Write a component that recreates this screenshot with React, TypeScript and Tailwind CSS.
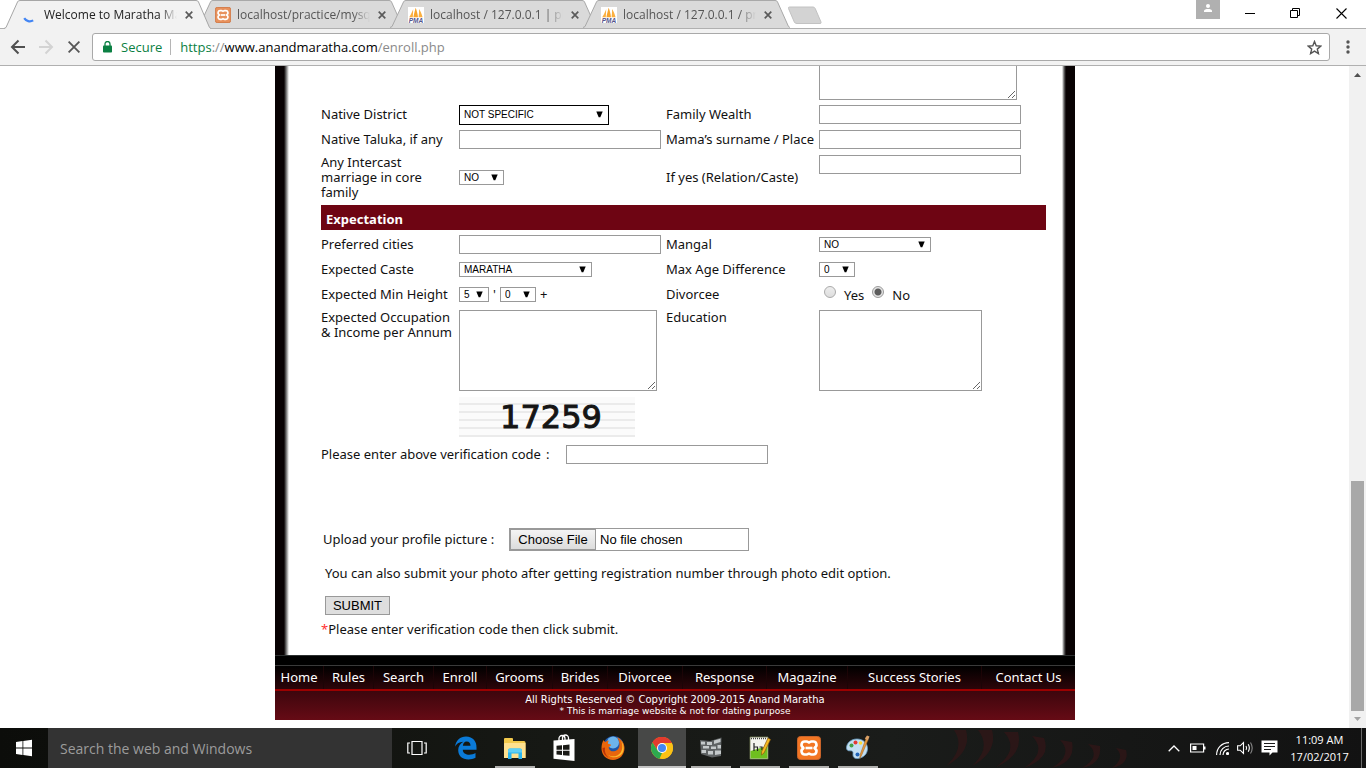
import React from "react";

const uiFont = "font-['Open_Sans','Noto_Sans',sans-serif]";

/* ---------- browser tabs ---------- */

function Spinner() {
  return (
    <svg width="16" height="16" viewBox="0 0 16 16" aria-hidden="true">
      <path d="M2.2 11.2a6.6 6.6 0 0 0 9 2.2" fill="none" stroke="#4285f4" strokeWidth="2.2" />
    </svg>
  );
}

function XamppLogo({ size, plate = "#f37623" }: { size: number; plate?: string }) {
  return (
    <svg width={size} height={size} viewBox="0 0 24 24" aria-hidden="true">
      <rect x="0.5" y="0.5" width="23" height="23" rx="3" fill={plate} stroke="#c9642a" />
      <path
        d="M8 5.5h1.6c1.4 0 2 1 2.4 1 .4 0 1-1 2.4-1H16a3.2 3.2 0 0 1 1.8 6 .6.6 0 0 0 0 1 3.2 3.2 0 0 1-1.8 6h-1.6c-1.4 0-2-1-2.4-1-.4 0-1 1-2.4 1H8a3.2 3.2 0 0 1-1.8-6 .6.6 0 0 0 0-1 3.2 3.2 0 0 1 1.800-6z"
        fill="none"
        stroke="#fff"
        strokeWidth="2.6"
      />
      <path d="M8.5 12h7" stroke="#fff" strokeWidth="2.6" />
    </svg>
  );
}

function PmaLogo() {
  return (
    <svg width="16" height="16" viewBox="0 0 16 16" aria-hidden="true">
      <rect width="16" height="16" fill="#fff" />
      <path d="M5.2 2.2C4 5 3 7.500 1.200 10.200h3.600z" fill="#fbb040" />
      <path d="M7.600.8C6.800 4.200 6 7 5.400 10.200H10C9.600 6.800 8.800 3.400 7.600.8z" fill="#f7a52d" />
      <path d="M11 2c.2 3-.2 5.600-.4 8.200h4C13.800 7.200 12.600 4.400 11 2z" fill="#fbb040" />
      <text x="8" y="15.800" textAnchor="middle" fontFamily="Liberation Sans, sans-serif" fontSize="6.500" fontWeight="700" fontStyle="italic" fill="#54558c">
        PMA
      </text>
    </svg>
  );
}

type TabProps = { title: string; icon: React.ReactNode; active?: boolean };

function Tab({ title, icon, active }: TabProps) {
  return (
    <div className={active ? "relative z-10 -mr-[14px] h-[29px] w-[207px] flex-none" : "relative -mr-[14px] h-7 w-[207px] flex-none"}>
      <svg className="absolute inset-0 size-full" viewBox="0 0 207 29" preserveAspectRatio="none" aria-hidden="true">
        <path d="M0 29 2 27.500 13.500 2Q14 .5 16 .5H192Q194 .5 194.500 2L205.500 27.500 207 29z" fill={active ? "#f2f2f2" : "#dadada"} />
        <path d="M0 28.500 2 27.500 13.500 2Q14 .5 16 .5H192Q194 .5 194.500 2L205.500 27.500 207 28.500" fill="none" stroke="#a6a6a6" />
      </svg>
      <div className="relative flex h-7 items-center pt-[2px] pl-[18px]">
        <span className="flex size-4 flex-none">{icon}</span>
        <a
          href="#tab"
          className={
            active
              ? "ml-[6px] w-[133px] flex-none overflow-hidden text-[12px] leading-4 whitespace-nowrap text-[#222] [mask-image:linear-gradient(to_right,#000_116px,transparent_133px)]"
              : "ml-[6px] w-[133px] flex-none overflow-hidden text-[12px] leading-4 whitespace-nowrap text-[#555] [mask-image:linear-gradient(to_right,#000_116px,transparent_133px)]"
          }
        >
          {title}
        </a>
        <button type="button" aria-label="Close tab" className="ml-[6px] flex size-3 items-center justify-center">
          <svg width="8" height="8" viewBox="0 0 9 9" aria-hidden="true">
            <path d="M.8.8l7.400 7.400M8.200.8.800 8.200" stroke="#5a5a5a" strokeWidth="1.900" />
          </svg>
        </button>
      </div>
    </div>
  );
}

function TabStrip() {
  return (
    <header className="relative z-10 flex h-7 bg-white pl-1">
      <Tab title="Welcome to Maratha Matrimony" icon={<Spinner />} active />
      <Tab title="localhost/practice/mysqli.php" icon={<XamppLogo size={16} plate="#e8915c" />} />
      <Tab title="localhost / 127.0.0.1 | phpMyAdmin" icon={<PmaLogo />} />
      <Tab title="localhost / 127.0.0.1 / practice" icon={<PmaLogo />} />
      <button type="button" aria-label="New tab" className="mt-[6px] ml-[11px] h-[19px] w-9">
        <svg width="36" height="19" viewBox="0 0 36 19" aria-hidden="true">
          <path d="M2.500 1H26q1.500 0 2.200 1.500L34 16q.5 1.500-1 1.500H10q-2 0-2.700-1.500L1.500 2.500Q1 1 2.500 1z" fill="#d3d3d3" stroke="#c2c2c2" />
        </svg>
      </button>
      <div className="ml-auto flex">
        <button type="button" aria-label="Profile" className="flex h-[19px] w-6 justify-center bg-[#b0b0b0] pt-1">
          <svg width="10" height="9" viewBox="0 0 10 9" aria-hidden="true">
            <circle cx="5" cy="2" r="2" fill="#fff" />
            <path d="M1 8V6.800C1 5.500 3 5 5 5s4 .5 4 1.800V8z" fill="#fff" />
          </svg>
        </button>
        <button type="button" aria-label="Minimize" className="ml-[7px] flex h-[26px] w-[46px] items-center justify-center">
          <svg width="10" height="10" viewBox="0 0 10 10" aria-hidden="true">
            <path d="M0 5.500h10" stroke="#000" />
          </svg>
        </button>
        <button type="button" aria-label="Restore" className="flex h-[26px] w-11 items-center justify-center">
          <svg width="10" height="10" viewBox="0 0 10 10" fill="none" stroke="#000" aria-hidden="true">
            <path d="M.5 2.500h7v7h-7zM2.500 2.500v-2h7v7h-2" />
          </svg>
        </button>
        <button type="button" aria-label="Close" className="flex h-[26px] w-[49px] items-center justify-center">
          <svg width="11" height="11" viewBox="0 0 11 11" aria-hidden="true">
            <path d="M.5.5l10 10M10.500.5l-10 10" stroke="#000" strokeWidth="1.100" />
          </svg>
        </button>
      </div>
    </header>
  );
}

function Toolbar() {
  return (
    <div className="flex h-[38px] flex-none items-center border-y border-[#b0b0b0] bg-[#f2f2f2] pr-2 pl-[10px]">
      <button type="button" aria-label="Back" className="flex size-4 items-center justify-center">
        <svg width="16" height="16" viewBox="0 0 16 16" fill="none" stroke="#505050" strokeWidth="2" aria-hidden="true">
          <path d="M15 8H2.500M8.500 1.500 2 8l6.500 6.500" />
        </svg>
      </button>
      <button type="button" aria-label="Forward" className="ml-3 flex size-4 items-center justify-center">
        <svg width="16" height="16" viewBox="0 0 16 16" fill="none" stroke="#d3d3d3" strokeWidth="2" aria-hidden="true">
          <path d="M1 8h12.500M7.500 1.500 14 8l-6.500 6.500" />
        </svg>
      </button>
      <button type="button" aria-label="Stop loading" className="ml-3 flex size-4 items-center justify-center">
        <svg width="12" height="12" viewBox="0 0 12 12" stroke="#555" strokeWidth="1.800" aria-hidden="true">
          <path d="M.6.6l10.800 10.800M11.400.6.600 11.400" />
        </svg>
      </button>
      <div className="ml-[10px] flex h-7 flex-1 items-center rounded-[3px] border border-[#a9a9a9] bg-white pr-[7px] pl-[10px]">
        <svg width="9" height="12" viewBox="0 0 9 12" aria-hidden="true">
          <rect y="4.500" width="9" height="7" rx=".8" fill="#0b8043" />
          <path d="M2 5V3a2.500 2.500 0 0 1 5 0v2" fill="none" stroke="#0b8043" strokeWidth="1.300" />
        </svg>
        <span className="ml-[9px] text-[13px] leading-5 text-[#0b8043]">Secure</span>
        <span className="ml-2 h-4 w-px bg-[#b5b5b5]" />
        <a href="#url" className="ml-[9px] flex-1 text-[13px] leading-5 text-[#8a8a8a]">
          <span className="text-[#0b8043]">https</span>://<span className="text-black">www.anandmaratha.com</span>/enroll.php
        </a>
        <button type="button" aria-label="Bookmark" className="flex">
          <svg width="15" height="15" viewBox="0 0 15 15" aria-hidden="true">
            <path d="M7.500 1.500 9.200 5.800l4.600.3-3.500 3 1.100 4.500-3.900-2.500-3.900 2.500 1.100-4.500-3.500-3 4.600-.3z" fill="none" stroke="#555" strokeWidth="1.400" />
          </svg>
        </button>
      </div>
      <button type="button" aria-label="Menu" className="ml-2 flex w-5 justify-center">
        <svg width="4" height="14" viewBox="0 0 4 14" fill="#555" aria-hidden="true">
          <circle cx="2" cy="2" r="1.700" />
          <circle cx="2" cy="7" r="1.700" />
          <circle cx="2" cy="12" r="1.700" />
        </svg>
      </button>
    </div>
  );
}

/* ---------- page form ---------- */

const textBox = "h-[19px] w-[202px] border border-[#999] bg-white px-1 text-[11px] outline-none";
const areaBase = "block h-[81px] resize border border-[#999] bg-white p-1 text-[11px] outline-none";
const rowGrid = "grid grid-cols-[138px_207px_153px_1fr] items-center";

type PickProps = { id: string; width: string; options: string[]; tall?: boolean; label?: string };

function Pick({ id, width, options, tall, label }: PickProps) {
  return (
    <span className={`relative inline-flex ${width}`}>
      <select
        id={id}
        aria-label={label}
        className={
          tall
            ? "h-5 w-full appearance-none border border-black bg-white px-1 font-['Liberation_Sans',sans-serif] text-[10px] leading-3 text-black"
            : "h-[15px] w-full appearance-none border border-[#999] bg-white px-1 font-['Liberation_Sans',sans-serif] text-[10px] leading-3 text-black"
        }
      >
        {options.map((o) => (
          <option key={o}>{o}</option>
        ))}
      </select>
      <svg className="pointer-events-none absolute inset-y-0 right-[6px] my-auto" width="7" height="7" viewBox="0 0 7 7" aria-hidden="true">
        <path d="M.3.5h6.400L4.300 6.300H2.700z" fill="#000" />
      </svg>
    </span>
  );
}

function Radio({ id, checked }: { id: string; checked?: boolean }) {
  return (
    <input
      id={id}
      type="radio"
      name="divorcee"
      defaultChecked={checked}
      className="size-3 appearance-none rounded-full border border-[#aaa] bg-[linear-gradient(#ededed,#dedede)] checked:border-[#9a9a9a] checked:bg-[radial-gradient(circle,#5c5c5c_0,#5c5c5c_3px,#e4e4e4_4px)]"
    />
  );
}

function FormBody() {
  return (
    <form className="pt-[3px] pr-[29px] pb-[18px] pl-[46px] text-[13px] leading-[15px] text-[#111]" onSubmit={(e) => e.preventDefault()}>
      <div className={`${rowGrid} pb-[2px]`}>
        <textarea aria-label="Family details" className={`${areaBase} col-start-4 w-[198px]`} />
      </div>
      <div className={`${rowGrid} h-[25px]`}>
        <label htmlFor="district">Native District</label>
        <Pick id="district" width="w-[150px]" options={["NOT SPECIFIC"]} tall />
        <label htmlFor="wealth">Family Wealth</label>
        <input id="wealth" className={textBox} />
      </div>
      <div className={`${rowGrid} h-[25px]`}>
        <label htmlFor="taluka">Native Taluka, if any</label>
        <input id="taluka" className={textBox} />
        <label htmlFor="mama">Mama’s surname / Place</label>
        <input id="mama" className={textBox} />
      </div>
      <div className={`${rowGrid} h-[51px]`}>
        <label htmlFor="intercast" className="pr-2">
          Any Intercast marriage in core family
        </label>
        <Pick id="intercast" width="w-[45px]" options={["NO", "YES"]} />
        <label htmlFor="relation">If yes (Relation/Caste)</label>
        <input id="relation" className={`${textBox} mt-[3px] self-start`} />
      </div>

      <h2 className="mt-[2px] mb-[2px] flex h-[25px] items-center bg-[#6e0513] px-[5px] pt-[3px] font-bold text-white">Expectation</h2>

      <div className={`${rowGrid} h-[25px]`}>
        <label htmlFor="cities">Preferred cities</label>
        <input id="cities" className={textBox} />
        <label htmlFor="mangal">Mangal</label>
        <Pick id="mangal" width="w-[112px]" options={["NO", "YES"]} />
      </div>
      <div className={`${rowGrid} h-[25px]`}>
        <label htmlFor="caste">Expected Caste</label>
        <Pick id="caste" width="w-[133px]" options={["MARATHA"]} />
        <label htmlFor="age">Max Age Difference</label>
        <Pick id="age" width="w-9" options={["0", "1", "2", "3"]} />
      </div>
      <div className={`${rowGrid} h-[25px]`}>
        <label htmlFor="feet">Expected Min Height</label>
        <span className="flex items-center">
          <Pick id="feet" width="w-[30px]" options={["5", "4", "6"]} />
          <span className="w-[11px] text-center">'</span>
          <Pick id="inches" width="w-9" options={["0", "1", "2"]} label="Inches" />
          <span className="ml-1">+</span>
        </span>
        <span>Divorcee</span>
        <span className="flex items-start pl-[5px]">
          <Radio id="div-yes" />
          <label htmlFor="div-yes" className="mt-[2px] ml-2">
            Yes
          </label>
          <span className="w-2" />
          <Radio id="div-no" checked />
          <label htmlFor="div-no" className="mt-[2px] ml-2">
            No
          </label>
        </span>
      </div>
      <div className="grid grid-cols-[138px_207px_153px_1fr] items-start pt-[3px]">
        <label htmlFor="occupation">
          Expected Occupation
          <br />
          &amp; Income per Annum
        </label>
        <textarea id="occupation" className={`${areaBase} w-[198px]`} />
        <label htmlFor="education">Education</label>
        <textarea id="education" className={`${areaBase} w-[163px]`} />
      </div>

      <div
        role="img"
        aria-label="Verification code"
        className="mt-[6px] mb-[5px] ml-[138px] flex h-10 w-44 items-center justify-center bg-[repeating-linear-gradient(#fbfbfb_0,#fbfbfb_6px,#ebebeb_6px,#ebebeb_8px)] pl-2 font-['DejaVu_Sans',sans-serif] text-[32px] leading-10 text-[#151515] [-webkit-text-stroke:1px_#151515]"
      >
        17259
      </div>

      <div className="flex h-[25px] items-center">
        <label htmlFor="code" className="flex w-[245px]">
          <span className="w-[225px]">Please enter above verification code</span>:
        </label>
        <input id="code" className={textBox} />
      </div>

      <div className="mt-[61px] flex h-[23px] items-center pl-[2px]">
        <label htmlFor="photo" className="w-[186px]">
          Upload your profile picture :
        </label>
        <input
          id="photo"
          type="file"
          className="h-[23px] w-60 border border-[#999] bg-white font-['Liberation_Sans',sans-serif] text-[13px] leading-[19px] text-black file:mr-1 file:h-[21px] file:w-[86px] file:border file:border-solid file:border-[#999] file:bg-[linear-gradient(#f4f4f4,#dcdcdc)] file:px-0 file:text-center file:text-[13px] file:text-black"
        />
      </div>
      <p className="mt-[15px] pl-1">You can also submit your photo after getting registration number through photo edit option.</p>
      <button
        type="submit"
        className="mt-[15px] ml-1 block h-[19px] w-[65px] border border-[#999] bg-[#dedede] text-center font-['Liberation_Sans',sans-serif] text-[13px] leading-[17px] text-black"
      >
        SUBMIT
      </button>
      <p className="mt-[7px]">
        <span className="text-[#f33]">*</span>Please enter verification code then click submit.
      </p>
    </form>
  );
}

const footerLinks = ["Home", "Rules", "Search", "Enroll", "Grooms", "Brides", "Divorcee", "Response", "Magazine", "Success Stories", "Contact Us"];

function SiteFooter() {
  return (
    <footer>
      <div className="h-[10px] border-t border-[#2c3030] bg-black" />
      <nav className="grid h-[26px] grid-cols-[48fr_50fr_60fr_53fr_66fr_55fr_75fr_84fr_81fr_134fr_94fr] border-t border-b-2 border-t-[#3a3a3a] border-b-[#9c0000] bg-[linear-gradient(#000,#2c0509)] text-[13px] text-white">
        {footerLinks.map((t) => (
          <a key={t} href="#nav" className="border-l border-[#1c0406] text-center leading-[22px] whitespace-nowrap first:border-l-0">
            {t}
          </a>
        ))}
      </nav>
      <div className="h-[29px] bg-[linear-gradient(#3d060d,#660b15)] pt-[3px] text-center font-['DejaVu_Sans',sans-serif] text-white">
        <p className="text-[10px] leading-3">All Rights Reserved © Copyright 2009-2015 Anand Maratha</p>
        <p className="text-[9px] leading-[10px]">* This is marriage website &amp; not for dating purpose</p>
      </div>
    </footer>
  );
}

function Viewport() {
  return (
    <div className="flex min-h-0 flex-1 bg-white">
      <main className="flex flex-1 flex-col justify-end overflow-hidden pb-2 pl-px font-['Noto_Sans',sans-serif]">
        <div className="mx-auto w-[800px]">
          <div className="bg-[linear-gradient(to_right,#080203_0,#080203_9px,#666_11px,#fff_14px,#fff_787px,#666_789px,#080203_791px)]">
            <FormBody />
          </div>
          <SiteFooter />
        </div>
      </main>
      <div className="flex w-[17px] flex-none flex-col items-center bg-[#f1f1f1]" aria-hidden="true">
        <svg width="17" height="17" viewBox="0 0 17 17">
          <path d="M5 11h7L8.500 7z" fill="#505050" />
        </svg>
        <div className="flex-1" />
        <div className="h-[230px] w-[13px] bg-[#a8a8a8]" />
        <svg width="17" height="17" viewBox="0 0 17 17">
          <path d="M5 6h7l-3.500 4z" fill="#a3a3a3" />
        </svg>
      </div>
    </div>
  );
}

/* ---------- taskbar ---------- */

function EdgeIcon() {
  return (
    <svg width="22" height="24" viewBox="0 0 22 24" aria-hidden="true">
      <path
        d="M0 10.800C.8 4.500 5.200.5 11 .5c7 0 10.700 5 10.500 11v2.300H7.800c.1 3.600 3.200 5 6.400 5 2.400 0 4.500-.6 6.300-1.700v4.700C18.400 23 16 23.500 13.500 23.500c-6.300 0-10.300-3.800-10.300-9.500 0-3.600 2-6.700 5.200-8.300C3.900 5.800 1.400 8 0 10.800zM7.900 9.800h7.600c0-2.700-1.200-4.300-3.800-4.300-2.300 0-3.600 1.900-3.800 4.300z"
        fill="#0a7ad8"
      />
    </svg>
  );
}

function FolderIcon() {
  return (
    <svg width="22" height="24" viewBox="0 0 22 24" aria-hidden="true">
      <path d="M0 3q0-1 1-1h7q1 0 1 1v2h11q1.500 0 1.500 1.500V22H0z" fill="#f2c94c" />
      <path d="M1 7h20.500v15H0V8q0-1 1-1z" fill="#ffe18f" />
      <path d="M4 23v-8.500q0-2 2-2h10q2 0 2 2V23h-3.500v-5.500h-7V23z" fill="#2bb5ee" />
      <path d="M4 16.500v-2q0-2 2-2h10q2 0 2 2v2z" fill="#5fd0f5" />
    </svg>
  );
}

function StoreIcon() {
  return (
    <svg width="22" height="28" viewBox="0 0 22 28" aria-hidden="true">
      <path d="M6 7V4.500a3 3 0 0 1 6 0V6M9.500 6V4a3 3 0 0 1 6 0v3" fill="none" stroke="#fff" strokeWidth="1.300" />
      <path d="M.5 6.500 21.500 5v22L.500 24.800z" fill="#fff" />
      <path d="M3.500 11.800l5.500-.5v4.400H3.500zM10 11.200l6.500-.6v5.100H10zM3.500 16.700H9V21l-5.500-.5zM10 16.700h6.500v5.100l-6.500-.6z" fill="#1a1a16" />
    </svg>
  );
}

function FirefoxIcon() {
  return (
    <svg width="24" height="26" viewBox="0 0 24 26" aria-hidden="true">
      <circle cx="12.500" cy="11.500" r="10.500" fill="#1f56a8" />
      <circle cx="12" cy="7.500" r="6" fill="#6db4ea" />
      <path
        d="M2.500 5c.5 1.200 1 1.600 2 2 1-1 2-1.500 3.500-1.300C7 6.500 6.800 7.600 7 8.800c1.500.2 2.800.6 3 1.200-.2 1-1.700 1.500-2.400 2.400.3 3 3.300 4.600 6.600 3.600 3-.9 4.300-3.500 4.300-6.500 0-3-1-5.500-2.500-7.300C20.500 4 23.500 8 23.500 13c0 7-5 12-11.500 12S.5 20 .5 13.500C.5 10 1.300 7 2.500 5z"
        fill="#e8660c"
      />
      <path d="M19.800 5.500c2.200 4 2 9-.3 12.200-3 4-8.500 4.800-12.500 2 4 4 11 3.300 14.200-1.200 2.600-3.800 1.700-9.500-1.400-13z" fill="#fdbb2d" />
      <path d="M1.500 13c.2 4.500 2.500 8 6 9.700C4.500 20 3.300 16.500 4 12.500z" fill="#b83208" />
    </svg>
  );
}

function ChromeIcon() {
  return (
    <svg width="22" height="22" viewBox="0 0 22 22" aria-hidden="true">
      <circle cx="11" cy="11" r="11" fill="#fbc116" />
      <path d="M11 11 1.470 5.500A11 11 0 0 1 20.530 5.500z" fill="#e33b2e" />
      <path d="M11 6h9.800a11 11 0 0 0-19.300-.5L6.700 13.500z" fill="#e33b2e" />
      <path d="M1.470 5.500 6.700 13.500 11 16l-2.500 5.700A11 11 0 0 1 1.470 5.500z" fill="#2da94f" />
      <path d="M15.300 13.500 10.500 22A11 11 0 0 0 20.800 6H11z" fill="#fbc116" />
      <circle cx="11" cy="11" r="5" fill="#fff" />
      <circle cx="11" cy="11" r="4" fill="#4486f4" />
    </svg>
  );
}

function WallIcon() {
  return (
    <svg width="24" height="24" viewBox="0 0 24 24" aria-hidden="true">
      <path d="M1 4l10 1 11.500-3.500L22 20l-9 1.500L2 18z" fill="#5f6364" />
      <path d="M2 5.500l4 .3v2.700H2zM8 6h5v3H8zM15 4.500l6.500-1.800V6L15 8zM4 10h6v2.500H4zM12 10.500h5V13h-5zM18.500 9H22v3.500h-3.500zM2.500 14H7v3H2.500zM9 15h5v3.500H9zM16 14.500h6V18l-6 1z" fill="#c4c9ca" />
    </svg>
  );
}

function EditorIcon() {
  return (
    <svg width="22" height="24" viewBox="0 0 22 24" aria-hidden="true">
      <path d="M1 1h18v22H1z" fill="#f4f4ee" stroke="#6e7a50" strokeWidth=".8" />
      <path d="M1.500 15 18.500 10v12.500h-17z" fill="#6fbf1f" />
      <path d="M2 2.500h16" stroke="#444" strokeWidth="1.500" strokeDasharray="1 1" />
      <path d="M5 7v8M5 11h3.500v4M10.500 11h2.500v3" stroke="#222" strokeWidth="1.200" fill="none" />
      <path d="M19 2l2.500 1.500L15 17l-2.500 2 .2-3.500z" fill="#f5b921" stroke="#8a5a12" strokeWidth=".7" />
    </svg>
  );
}

function PaintIcon() {
  return (
    <svg width="26" height="26" viewBox="0 0 26 26" aria-hidden="true">
      <path d="M12 4C5.500 4 1.500 8.500 1.500 13c0 2 1.500 3 3.500 2.800 2.500-.2 3.300 1 3 3C7.600 22 9.500 24 13 23.500c6-.8 9.500-5 9.500-10C22.500 8 18 4 12 4z" fill="#c3dff2" stroke="#6a9ec4" strokeWidth=".8" />
      <circle cx="6.500" cy="10.500" r="2" fill="#43a047" />
      <circle cx="10.500" cy="7.500" r="2" fill="#e53935" />
      <circle cx="15.500" cy="8" r="1.800" fill="#fdd835" />
      <circle cx="12.500" cy="19.500" r="2" fill="#1e63b8" />
      <path d="M21 3.500 23 5l-6.500 15.500-1.700 3 .4-4z" fill="#e59a3c" stroke="#9a5a1a" strokeWidth=".5" />
      <path d="M19.800 3.500 22 .5l2.500 1-1.500 4z" fill="#d9a066" />
    </svg>
  );
}

type TaskApp = { name: string; icon: React.ReactNode; state?: "open" | "front" };

const apps: TaskApp[] = [
  {
    name: "Task View",
    icon: (
      <svg width="20" height="16" viewBox="0 0 20 16" fill="none" stroke="#fff" strokeWidth="1.200" aria-hidden="true">
        <path d="M5 1.500h10v13H5zM3 3H.8v10H3M17 3h2.200v10H17" />
      </svg>
    ),
  },
  { name: "Edge", icon: <EdgeIcon /> },
  { name: "File Explorer", icon: <FolderIcon />, state: "open" },
  { name: "Store", icon: <StoreIcon /> },
  { name: "Firefox", icon: <FirefoxIcon /> },
  { name: "Chrome", icon: <ChromeIcon />, state: "front" },
  { name: "Server", icon: <WallIcon />, state: "open" },
  { name: "Text Editor", icon: <EditorIcon />, state: "open" },
  { name: "XAMPP", icon: <XamppLogo size={24} />, state: "open" },
  { name: "Paint", icon: <PaintIcon />, state: "open" },
];

function Taskbar() {
  return (
    <div className={`relative flex h-10 flex-none bg-[linear-gradient(to_right,#0c0d0a,#161814_40%,#1a1c1a_65%,#121212)] ${uiFont}`}>
      <svg className="pointer-events-none absolute top-0 right-[230px]" width="200" height="40" viewBox="0 0 200 40" fill="#351517" aria-hidden="true">
        <path d="M18 2q12 18-8 36 26-14 20-36zM42 2q14 18-6 36 26-14 20-36zM68 4q16 18-8 35 28-12 22-35zM96 8q16 16-8 32 28-10 20-30zM124 12q14 14-8 28 24-6 20-26zM152 16q14 12-6 24 20-4 18-22zM180 20q10 10-4 20 18-4 14-18z" opacity=".65" />
      </svg>
      <button type="button" aria-label="Start" className="flex w-12 items-center justify-center">
        <svg width="16" height="18" viewBox="0 0 16 18" fill="#fff" aria-hidden="true">
          <path d="M0 2.900 6.500 2v6.500H0zM7.300 1.900 16 .700v7.800H7.300zM0 9.400h6.500v6.500L0 15zM7.300 9.400H16v7.900l-8.700-1.200z" />
        </svg>
      </button>
      <input
        aria-label="Search"
        placeholder="Search the web and Windows"
        className="w-[344px] flex-none bg-[#333] px-3 text-[14px] outline-none placeholder:text-[#9c9c9c]"
      />
      <div className="flex gap-px pl-px">
        {apps.map((a) => (
          <button
            key={a.name}
            type="button"
            aria-label={a.name}
            className={a.state === "front" ? "relative flex w-12 items-center justify-center bg-[#474847]" : "relative flex w-12 items-center justify-center"}
          >
            {a.icon}
            {a.state && <span className={a.state === "front" ? "absolute inset-x-0 bottom-0 h-[2px] bg-[#c4c4c4]" : "absolute inset-x-1 bottom-0 h-[2px] bg-[#b0b0ae]"} />}
          </button>
        ))}
      </div>
      <div className="relative ml-auto flex items-center pr-1">
        <button type="button" aria-label="Hidden icons" className="flex w-6 justify-center">
          <svg width="12" height="7" viewBox="0 0 12 7" fill="none" stroke="#fff" strokeWidth="1.300" aria-hidden="true">
            <path d="M.7 6.300 6 1l5.300 5.300" />
          </svg>
        </button>
        <button type="button" aria-label="Battery" className="flex w-6 justify-center">
          <svg width="16" height="10" viewBox="0 0 16 10" aria-hidden="true">
            <path d="M.6 1h13v8H.6z" fill="none" stroke="#fff" strokeWidth="1.200" />
            <path d="M2.500 3h4v4h-4zM14 3.500h1.500v3H14z" fill="#fff" />
          </svg>
        </button>
        <button type="button" aria-label="Network" className="flex w-6 justify-center">
          <svg width="13" height="13" viewBox="0 0 13 13" fill="none" stroke="#fff" strokeWidth="1.200" aria-hidden="true">
            <path d="M.6 13C.6 6 6 .6 13 .6M4 13c0-5 4-9 9-9M7 13c0-3.300 2.700-6 6-6" />
            <circle cx="11.500" cy="11.500" r="1" fill="#fff" />
          </svg>
        </button>
        <button type="button" aria-label="Volume" className="flex w-[22px] justify-center">
          <svg width="17" height="14" viewBox="0 0 17 14" fill="none" stroke="#fff" strokeWidth="1.100" aria-hidden="true">
            <path d="M.6 4.800h2.600L6.500 1.500v11L3.200 9.200H.6zM9 5q1.200 2 0 4M11.200 3.300q2.300 3.700 0 7.400" />
            <path d="M13.500 1.500q3.400 5.500 0 11" stroke="#888" />
          </svg>
        </button>
        <button type="button" aria-label="Notifications" className="flex w-[26px] justify-center">
          <svg width="17" height="16" viewBox="0 0 17 16" aria-hidden="true">
            <path d="M.5.500h16v12h-5L8.500 15.500V12.500h-8z" fill="#fff" />
            <path d="M3 3.500h11M3 6.500h11M3 9.500h7" stroke="#1a1a1a" strokeWidth="1.200" />
          </svg>
        </button>
        <div className="mr-1 w-[75px] text-center text-[11px] leading-[17px] text-white">
          <p>11:09 AM</p>
          <p>17/02/2017</p>
        </div>
        <span className="h-10 w-px bg-[#6a6a6a]" />
      </div>
    </div>
  );
}

export default function App() {
  return (
    <div className={`flex h-screen flex-col overflow-hidden ${uiFont}`}>
      <TabStrip />
      <Toolbar />
      <Viewport />
      <Taskbar />
    </div>
  );
}
